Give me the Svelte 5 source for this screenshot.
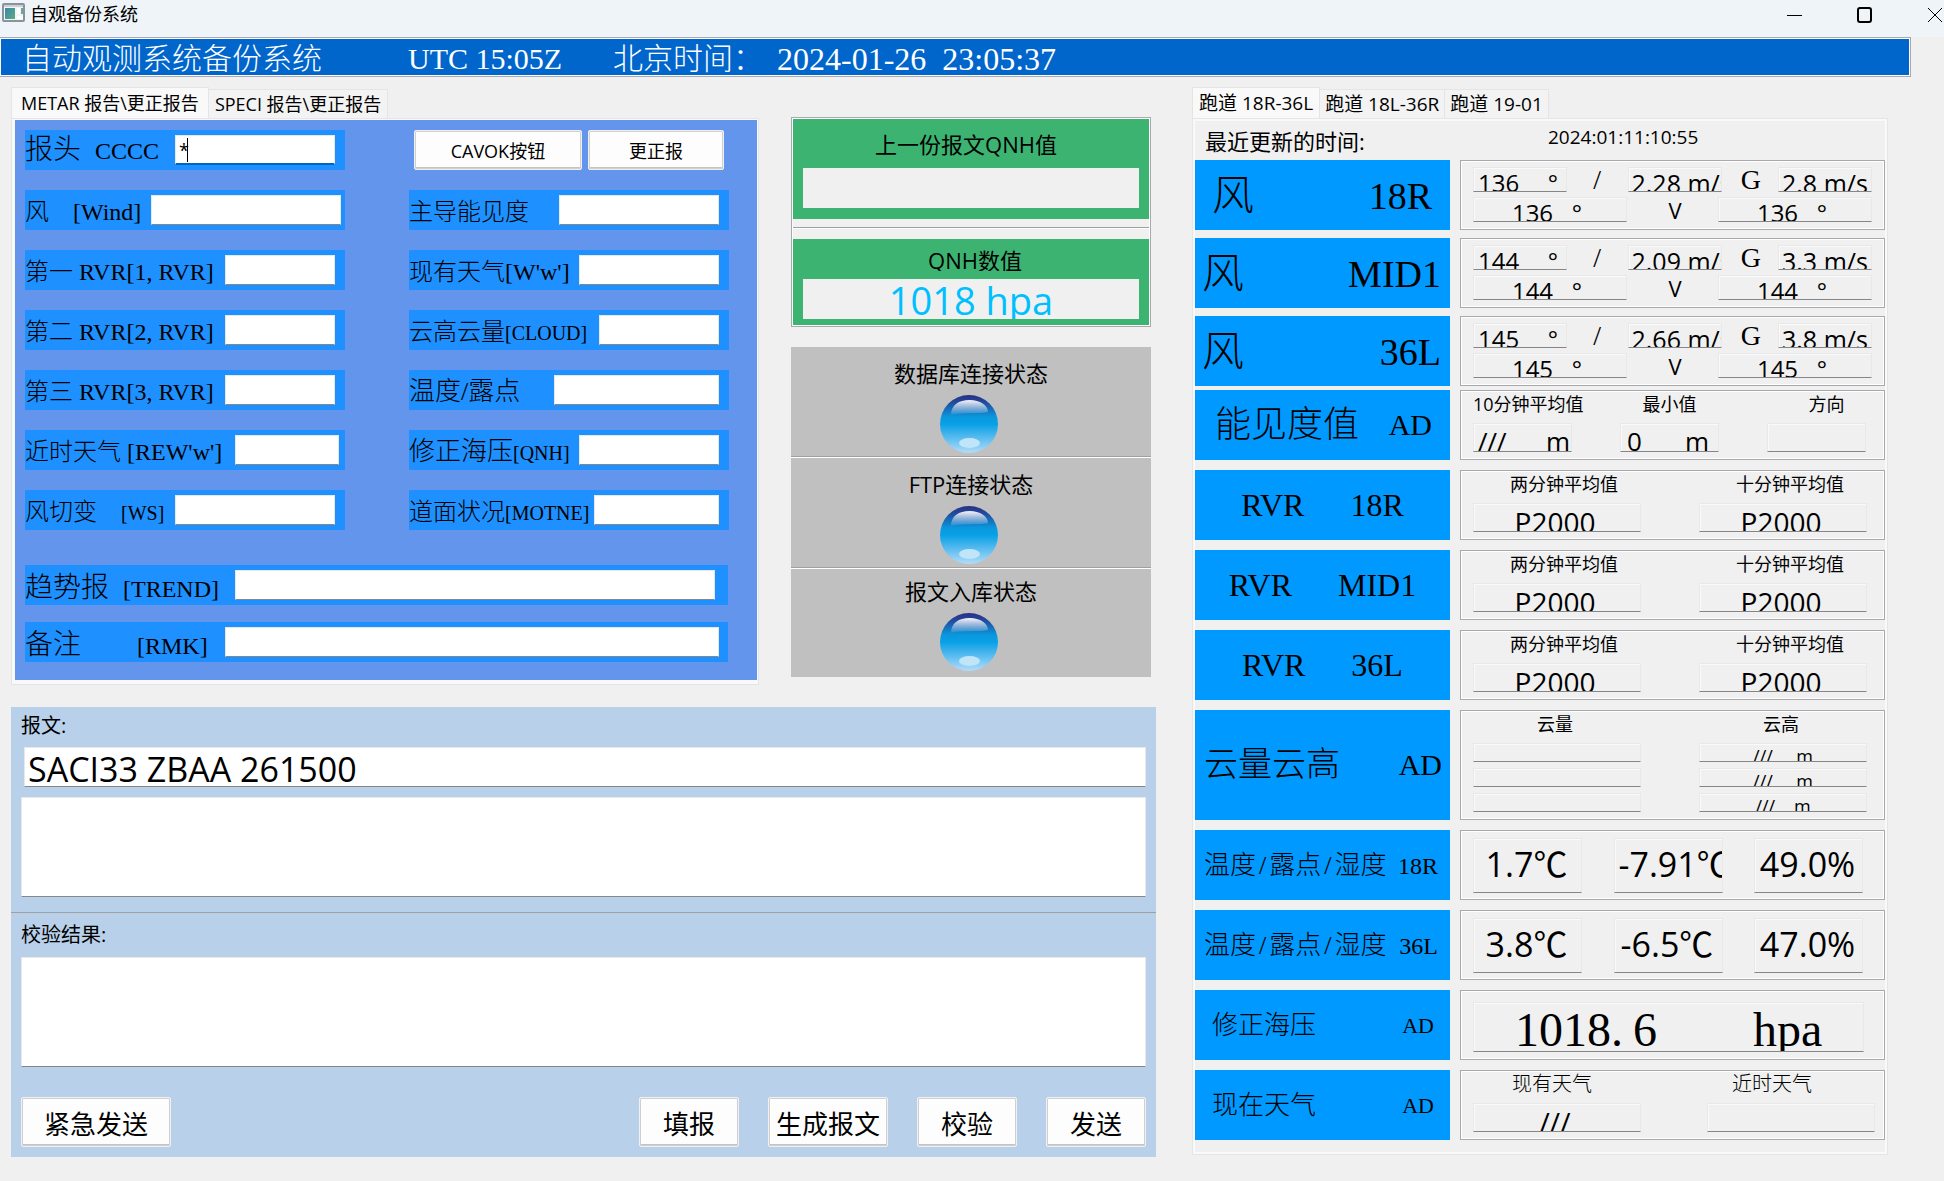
<script>
  const leftFields = [
    { id: 'wind', label: '风    ', code: '[Wind]', box: 190, end: 4 },
    { id: 'rvr1', label: '第一 ', code: 'RVR[1, RVR]', box: 110, end: 10 },
    { id: 'rvr2', label: '第二 ', code: 'RVR[2, RVR]', box: 110, end: 10 },
    { id: 'rvr3', label: '第三 ', code: 'RVR[3, RVR]', box: 110, end: 10 },
    { id: 'rew', label: '近时天气 ', code: "[REW'w']", box: 104, end: 6 },
    { id: 'ws', label: '风切变    ', code: '[WS]', box: 160, end: 10, tight: true }
  ];
  const rightFields = [
    { id: 'vis', label: '主导能见度', box: 160, end: 10 },
    { id: 'ww', label: '现有天气', code: "[W'w']", box: 140, end: 10 },
    { id: 'cloud', label: '云高云量', code: '[CLOUD]', box: 120, end: 10, tight: true },
    { id: 'temp', label: '温度/露点', box: 165, end: 10, big: true },
    { id: 'qnh', label: '修正海压', code: '[QNH]', box: 140, end: 10, big: true, tight: true },
    { id: 'motne', label: '道面状况', code: '[MOTNE]', box: 125, end: 10, tight: true }
  ];
  const winds = [
    { name: '18R', inset: true, dir: '136', speed: '2.28 m/s', gust: '2.8 m/s' },
    { name: 'MID1', dir: '144', speed: '2.09 m/s', gust: '3.3 m/s' },
    { name: '36L', dir: '145', speed: '2.66 m/s', gust: '3.8 m/s' }
  ];
  const rvrs = ['18R', 'MID1', '36L'];
  const clouds = ['///     m', '///     m', '///    m'];
  const temps = [
    { name: '18R', values: ['1.7℃', '-7.91℃', '49.0%'] },
    { name: '36L', values: ['3.8℃', '-6.5℃', '47.0%'] }
  ];
  const states = ['数据库连接状态', 'FTP连接状态', '报文入库状态'];
  const runways = ['跑道 18R-36L', '跑道 18L-36R', '跑道 19-01'];
  const reports = ['METAR 报告\\更正报告', 'SPECI 报告\\更正报告'];
</script>

{#snippet field(f)}
  <div class="field">
    <label for={f.id} class:big={f.big}>{f.label}<span class:tight={f.tight}>{f.code ?? ''}</span></label>
    <input id={f.id} type="text" style:width="{f.box}px" style:margin-right="{f.end}px" />
  </div>
{/snippet}

<div class="window">
  <header class="titlebar">
    <svg width="24" height="20" viewBox="0 0 24 20" aria-hidden="true">
      <defs>
        <linearGradient id="appfill" x1="0" y1="0" x2="1" y2="1">
          <stop offset="0" stop-color="#3f83a8" /><stop offset="1" stop-color="#57b083" />
        </linearGradient>
      </defs>
      <rect x="1" y="1" width="21" height="17" rx="1" fill="#f4f4f4" stroke="#8b929b" stroke-width="2" />
      <rect x="2" y="2" width="19" height="2" fill="#c9d0dc" />
      <rect x="3" y="5" width="10" height="11" fill="url(#appfill)" />
      <rect x="15" y="5" width="3" height="6" fill="#fff" /><rect x="19" y="5" width="2" height="6" fill="#6aa6a2" />
      <rect x="15" y="13" width="6" height="3" fill="#fff" />
    </svg>
    <h1>自观备份系统</h1>
    <div class="controls">
      <button aria-label="最小化"><svg width="16" height="16" viewBox="0 0 16 16"><path d="M0 8.500H15" /></svg></button>
      <button aria-label="最大化"><svg width="16" height="16" viewBox="0 0 16 16"><rect x="1" y="1" width="13" height="14" rx="2" class="thick" /></svg></button>
      <button aria-label="关闭"><svg width="16" height="16" viewBox="0 0 16 16"><path d="M1 1L15 15M15 1L1 15" /></svg></button>
    </div>
  </header>

  <div class="banner song">
    <span class="name">自动观测系统备份系统</span>
    <span class="utc">UTC 15:05Z</span>
    <span class="bj">北京时间：</span>
    <time>2024-01-26  23:05:37</time>
  </div>

  <main>
    <div class="left">
      <div class="upper">
        <section>
          <div class="tabs reports" role="tablist">
            {#each reports as t, i}
              <button role="tab" aria-selected={i === 0} class:active={i === 0}>{t}</button>
            {/each}
          </div>
          <div class="pane">
            <form class="form song">
              <div class="field">
                <label for="cccc" class="huge top">{'报头  '}<span class="tight">CCCC</span></label>
                <div class="focus">
                  <input id="cccc" type="text" value="*" />
                  <span class="caret"></span>
                </div>
              </div>
              <div class="actions">
                <button type="button" class="btn cavok">CAVOK按钮</button>
                <button type="button" class="btn fix">更正报</button>
              </div>
              {#each leftFields as f, i}
                {@render field(f)}
                {@render field(rightFields[i])}
              {/each}
              <div class="field wide trend">
                <label for="trend" class="huge">{'趋势报  '}<span class="tight">[TREND]</span></label>
                <input id="trend" type="text" />
              </div>
              <div class="field wide rmk">
                <label for="rmk" class="huge">{'备注        '}<span class="tight">[RMK]</span></label>
                <input id="rmk" type="text" />
              </div>
            </form>
          </div>
        </section>

        <section class="middle">
          <div class="qnh">
            <div class="green last">
              <span class="cap">上一份报文QNH值</span>
              <output></output>
            </div>
            <hr />
            <div class="green now">
              <span class="cap">QNH数值</span>
              <output>1018 hpa</output>
            </div>
          </div>
          <div class="states">
            {#each states as s}
              <div class="state">
                <span>{s}</span>
                <svg width="58" height="58" viewBox="0 0 58 58" aria-hidden="true">
                  <defs>
                    <linearGradient id="orb" x1="0" y1="0" x2="0" y2="1">
                      <stop offset="0" stop-color="#2a2f85" /><stop offset="0.12" stop-color="#22489b" />
                      <stop offset="0.38" stop-color="#0a98de" /><stop offset="0.5" stop-color="#08a0e6" />
                      <stop offset="0.75" stop-color="#5dbdf0" /><stop offset="1" stop-color="#b4dcf8" />
                    </linearGradient>
                    <linearGradient id="shine" x1="0" y1="0" x2="0" y2="1">
                      <stop offset="0" stop-color="#fff" stop-opacity="0.95" />
                      <stop offset="1" stop-color="#fff" stop-opacity="0.05" />
                    </linearGradient>
                  </defs>
                  <circle cx="29" cy="29" r="29" fill="url(#orb)" />
                  <path d="M11 20C11 10 19 5 29.500 5S48 10 48 17C42 19 20 17 11 20Z" fill="url(#shine)" />
                  <ellipse cx="29.500" cy="48" rx="10.500" ry="5" fill="#c0e5f9" />
                </svg>
              </div>
            {/each}
          </div>
        </section>
      </div>

      <section class="message">
        <label for="head">报文:</label>
        <input id="head" type="text" value="SACI33 ZBAA 261500" />
        <textarea id="body" aria-label="报文内容"></textarea>
        <hr />
        <label for="result">校验结果:</label>
        <textarea id="result"></textarea>
        <div class="buttons">
          <button class="btn urgent">紧急发送</button>
          <button class="btn small">填报</button>
          <button class="btn make">生成报文</button>
          <button class="btn small">校验</button>
          <button class="btn small">发送</button>
        </div>
      </section>
    </div>

    <section class="right">
      <div class="tabs" role="tablist">
        {#each runways as t, i}
          <button role="tab" aria-selected={i === 0} class:active={i === 0}>{t}</button>
        {/each}
      </div>
      <div class="pane runway">
        <div class="updated">
          <span>最近更新的时间:</span>
          <time>2024:01:11:10:55</time>
        </div>

        <div class="winds">
          {#each winds as w}
            <div class="row">
              <div class="tag wind song" class:inset={w.inset}><span>风</span><span class="code">{w.name}</span></div>
              <div class="box windbox">
                <div class="line">
                  <output class="w3 lefty"><span>{w.dir}</span><span>°</span></output>
                  <span class="song sign slash">/</span>
                  <output class="w3">{w.speed}</output>
                  <span class="song sign">G</span>
                  <output class="w3">{w.gust}</output>
                </div>
                <div class="line">
                  <output class="w2">{w.dir}   °</output>
                  <span class="vee">V</span>
                  <output class="w2">{w.dir}   °</output>
                </div>
              </div>
            </div>
          {/each}
        </div>

        <div class="rows">
          <div class="row">
            <div class="tag vis song"><span>能见度值</span><span class="code">AD</span></div>
            <div class="box visbox">
              <div class="cell first"><span>10分钟平均值</span><output class="spread"><span>///</span><span>m</span></output></div>
              <div class="cell"><span>最小值</span><output class="spread min"><span>0</span><span>m</span></output></div>
              <div class="cell dir"><span>方向</span><output></output></div>
            </div>
          </div>

          {#each rvrs as r}
            <div class="row">
              <div class="tag rvr song"><span>RVR</span><span>{r}</span></div>
              <div class="box pair">
                <div class="cell"><span>两分钟平均值</span><output>P2000</output></div>
                <div class="cell"><span>十分钟平均值</span><output>P2000</output></div>
              </div>
            </div>
          {/each}

          <div class="row">
            <div class="tag cloud song"><span>云量云高</span><span class="code">AD</span></div>
            <div class="box pair cloudbox">
              <div class="cell"><span>云量</span>{#each clouds as _}<output></output>{/each}</div>
              <div class="cell"><span>云高</span>{#each clouds as c}<output>{c}</output>{/each}</div>
            </div>
          </div>

          {#each temps as t}
            <div class="row">
              <div class="tag temp song">
                <span>温度<i>/</i>露点<i>/</i>湿度</span><span class="code">{t.name}</span>
              </div>
              <div class="box tempbox">
                {#each t.values as v}<output>{v}</output>{/each}
              </div>
            </div>
          {/each}

          <div class="row">
            <div class="tag plain song"><span>修正海压</span><span class="code">AD</span></div>
            <div class="box sea"><output class="song"><span>1018.</span><span class="dec">6</span><span class="unit">hpa</span></output></div>
          </div>

          <div class="row">
            <div class="tag plain song"><span>现在天气</span><span class="code">AD</span></div>
            <div class="box pair weather">
              <div class="cell"><span class="song">现有天气</span><output>///</output></div>
              <div class="cell recent"><span class="song">近时天气</span><output></output></div>
            </div>
          </div>
        </div>
      </div>
    </section>
  </main>
</div>

<style>
  :global(body) { margin: 0; background: #f0f0f0; }
  .window {
    --ui: "Open Sans", "Noto Sans CJK SC", sans-serif;
    min-height: 100vh;
    background: #f0f0f0;
    color: #000;
    font: 18px/24px var(--ui);
  }
  .window *, .window { box-sizing: border-box; }
  label, span, output, button, time, h1 { white-space: pre; }
  button, input, textarea { font-family: var(--ui); color: #000; margin: 0; }
  .song { font-family: "Liberation Serif", "Noto Sans CJK SC", serif; font-weight: 300; }

  .titlebar { display: flex; align-items: flex-start; height: 37px; padding: 3px 0 0 2px; background: #eff4f9; }
  .titlebar h1 { margin: 0 0 0 4px; font-size: 18px; font-weight: 400; line-height: 22px; }
  .controls { display: flex; gap: 54px; margin-left: auto; padding: 4px 1px 0 0; }
  .controls button { width: 16px; height: 16px; padding: 0; border: 0; background: none; display: flex; }
  .controls path, .controls rect { fill: none; stroke: #000; stroke-width: 1; }
  .controls .thick { stroke-width: 2; }

  .banner {
    display: flex; align-items: center; height: 40px; margin-right: 33px; padding: 4px 0 0 22px;
    background: #06c; color: #fff; font-size: 30px; line-height: 34px;
    border: 1px solid #a9a9ad; border-left: 0; box-shadow: inset 0 0 0 1px #fff;
  }
  .banner .name { width: 386px; }
  .banner .utc { width: 205px; }
  .banner .bj { width: 164px; }
  .banner time { font-size: 32px; }

  main { display: grid; grid-template-columns: 1145fr 696fr; gap: 36px; padding: 10px 56px 24px 11px; align-items: start; }
  .upper { display: grid; grid-template-columns: 748fr 360fr; gap: 32px; padding-right: 5px; }

  .tabs { display: flex; align-items: flex-end; height: 31px; }
  .tabs button {
    height: 29px; padding: 0 5px; font-size: 19px; line-height: 26px; border: 1px solid #e5e5e5; border-left: 0;
    border-bottom: 0; background: #f3f3f3;
  }
  .tabs button.active { height: 31px; padding: 0 6px; border-left: 1px solid #e5e5e5; background: #f9f9f9; }
  .reports button { font-size: 18px; padding: 0 6px; }
  .reports button.active { padding: 0 9px; }
  .pane { border: 1px solid #e5e5e5; background: #f9f9f9; padding: 1px 1px 4px 3px; }

  .form {
    display: grid; grid-template-columns: 1fr 1fr; gap: 20px 64px; padding: 10px 28px 18px 10px; background: #6495ed;
  }
  .field { display: flex; align-items: center; height: 40px; background: #1e90ff; min-width: 0; }
  .field label { flex: 1; min-width: 0; padding-top: 4px; font-size: 24px; line-height: 32px; }
  .field label.big { font-size: 26px; }
  .field label.huge { font-size: 28px; padding-top: 6px; }
  .field label.top { padding-top: 0; }
  .field .tight { font-size: 20px; }
  .field .huge .tight { font-size: 24px; }
  .field input { height: 30px; flex: none; }
  input, textarea {
    background: #fff; border: 1px solid #e8e8e8; border-bottom-color: #868686; border-radius: 0; outline: 0; padding: 0 4px;
    display: block; resize: none; font-size: 18px;
  }
  .focus { position: relative; width: 160px; margin-right: 10px; }
  .focus input { width: 100%; border-bottom: 2px solid #0067c0; padding: 0 3px; }
  .caret { position: absolute; left: 12px; top: 3px; width: 1px; height: 24px; background: #000; }
  .wide { grid-column: span 2; margin-right: 1px; }
  .trend { margin-top: 15px; }
  .rmk { margin-top: -3px; }
  .trend input { width: 480px; margin-right: 13px; }
  .rmk input { width: 494px; margin-right: 9px; }
  .actions { display: flex; gap: 6px; padding: 0 5px; }
  .actions .cavok { flex: 168; }
  .actions .fix { flex: 136; }
  .btn {
    padding: 0; font-size: 18px; background: #fdfdfd; border: 1px solid #f0f0f0; outline: 1px solid #d0d0d0;
    outline-offset: -2px; border-radius: 2px; box-shadow: inset 0 -2px 0 #c4c4c4;
  }

  .middle { padding-top: 30px; }
  .qnh { padding: 1px; border: 1px solid #a9a9ad; box-shadow: inset 0 0 0 1px #fff; display: flex; flex-direction: column; }
  .green { display: flex; flex-direction: column; align-items: center; background: #3cb371; padding: 0 10px; }
  .green .cap { font-size: 22px; line-height: 28px; overflow: hidden; }
  .green output {
    align-self: stretch; height: 40px; background: #f0f0f0; overflow: hidden; text-align: center;
    color: #00bfff; font-size: 38px; line-height: 42px;
  }
  .last { height: 100px; padding-top: 11px; }
  .last .cap { padding-right: 10px; margin-bottom: 10px; }
  .now { height: 86px; padding-top: 7px; }
  .now .cap { padding-left: 8px; height: 25px; margin-bottom: 8px; }
  hr { width: 100%; height: 2px; margin: 8px 0 10px; border: 0; background: #a0a0a0; border-bottom: 1px solid #fff; }
  .states { margin-top: 20px; background: #c0c0c0; }
  .state {
    display: flex; flex-direction: column; align-items: center; height: 111px; padding-top: 11px;
    font-size: 22px; line-height: 30px; border-bottom: 1px solid #fff; box-shadow: inset 0 -1px 0 #a0a0a0;
  }
  .state svg { margin: 7px 4px 0 0; }
  .state:last-child { height: 108px; padding-top: 7px; border: 0; box-shadow: none; }

  .message { margin-top: 22px; background: #b9d0ea; padding: 5px 10px 10px; display: flex; flex-direction: column; }
  .message label { font-size: 20px; line-height: 28px; }
  .message input { height: 40px; margin: 7px 0 10px 3px; padding: 4px 3px 0; font-size: 34px; }
  .message textarea { height: 100px; }
  .message hr { width: auto; height: 1px; margin: 15px -10px 8px; border: 0; }
  .message #result { height: 110px; margin-top: 8px; }
  .buttons { display: flex; gap: 29px; margin-top: 30px; height: 50px; }
  .buttons .btn { font-size: 26px; padding-top: 2px; }
  .urgent { width: 150px; margin-right: auto; }
  .small { width: 100px; }
  .make { width: 120px; }

  .runway { background: #f0f0f0; padding: 1px 2px 14px; box-shadow: inset 0 0 0 2px #f9f9f9; }
  .updated { display: flex; height: 40px; padding: 5px 0 0 10px; }
  .updated span { flex: 344; font-size: 22px; line-height: 32px; }
  .updated time { flex: 338; font-size: 19px; line-height: 24px; }
  .winds, .rows { display: flex; flex-direction: column; gap: 8px; }
  .rows { gap: 10px; margin-top: 4px; }
  .row { display: grid; grid-template-columns: 255fr 425fr; gap: 10px; min-height: 70px; }
  .tag { display: flex; align-items: center; justify-content: space-between; background: #09f; }
  .wind { font-size: 42px; line-height: 48px; padding: 2px 9px 0 7px; }
  .wind.inset { padding: 2px 18px 0 17px; }
  .wind .code { font-size: 38px; }
  .vis { font-size: 36px; padding: 0 18px 0 20px; line-height: 44px; }
  .vis .code { font-size: 30px; }
  .rvr { font-size: 32px; justify-content: center; gap: 46px; line-height: 40px; }
  .cloud { font-size: 34px; padding: 0 8px 0 9px; min-height: 110px; line-height: 40px; }
  .cloud .code { font-size: 30px; }
  .temp { font-size: 26px; padding: 2px 12px 0 9px; line-height: 32px; }
  .temp i { font-style: normal; padding: 0 3px; }
  .temp .code { font-size: 24px; }
  .plain { font-size: 26px; padding: 2px 16px 0 17px; line-height: 32px; }
  .plain .code { font-size: 22px; }

  .box { border: 1px solid #a9a9ad; box-shadow: inset 0 0 0 1px #fff; padding: 0 12px; min-width: 0; }
  .box output {
    display: block; border: 1px solid #e8e8e8; border-bottom-color: #868686; box-shadow: inset 1px 1px 0 #fafafa;
    overflow: hidden; text-align: center; padding: 0 4px;
  }
  .windbox { display: flex; flex-direction: column; gap: 5px; padding-top: 6px; }
  .line { display: flex; justify-content: space-between; align-items: center; height: 25px; font-size: 24px; line-height: 30px; }
  .line output { height: 25px; }
  .line .w3 { width: 94px; padding-left: 3px; font-size: 25px; text-align: left; }
  .line .w2 { width: 154px; padding-right: 10px; }
  .line .lefty { display: flex; justify-content: space-between; padding: 0 8px 0 4px; font-size: 24px; }
  .sign { width: 18px; text-align: center; font-size: 28px; line-height: 24px; }
  .sign.slash { width: 22px; }
  .vee { padding-left: 5px; line-height: 24px; font-size: 22px; }

  .visbox { display: flex; justify-content: space-between; padding-right: 18px; }
  .cell { display: flex; flex-direction: column; align-items: center; padding-top: 1px; min-width: 0; }
  .cell > output { align-self: stretch; height: 29px; margin-top: 7px; font-size: 28px; line-height: 36px; }
  .visbox .cell { width: 99px; }
  .visbox .first { align-items: flex-start; }
  .visbox .dir > span { padding-left: 20px; }
  .visbox .cell > output { font-size: 26px; line-height: 34px; }
  .box .spread { display: flex; justify-content: space-between; padding: 0 1px 0 4px; }
  .box .spread.min { padding: 0 9px 0 6px; }

  .pair { display: grid; grid-template-columns: 1fr 1fr; column-gap: 58px; padding-right: 17px; }
  .pair .cell > span { padding-left: 14px; }
  .pair .cell > output { padding-right: 8px; }
  .cloudbox .cell > span { padding: 0 4px 0 0; }
  .cloudbox .cell > output { height: 19px; margin-top: 6px; padding: 0 4px; font-size: 18px; line-height: 24px; }
  .cloudbox .cell > output:nth-child(2) { margin-top: 7px; }
  .tempbox { display: flex; justify-content: space-between; align-items: center; padding-right: 21px; }
  .tempbox output { width: 109px; height: 55px; padding: 0 6px 0 4px; font-size: 34px; line-height: 50px; }
  .sea { padding: 11px 20px 0 12px; }
  .sea output { display: flex; height: 50px; padding: 0 0 0 41px; font-size: 48px; line-height: 54px; }
  .sea .dec { margin-left: 10px; }
  .sea .unit { margin-left: 96px; }
  .weather { column-gap: 66px; padding-right: 9px; }
  .weather .cell > span { font-size: 20px; padding: 0 10px 0 0; }
  .weather .recent > span { padding-right: 38px; }
</style>
